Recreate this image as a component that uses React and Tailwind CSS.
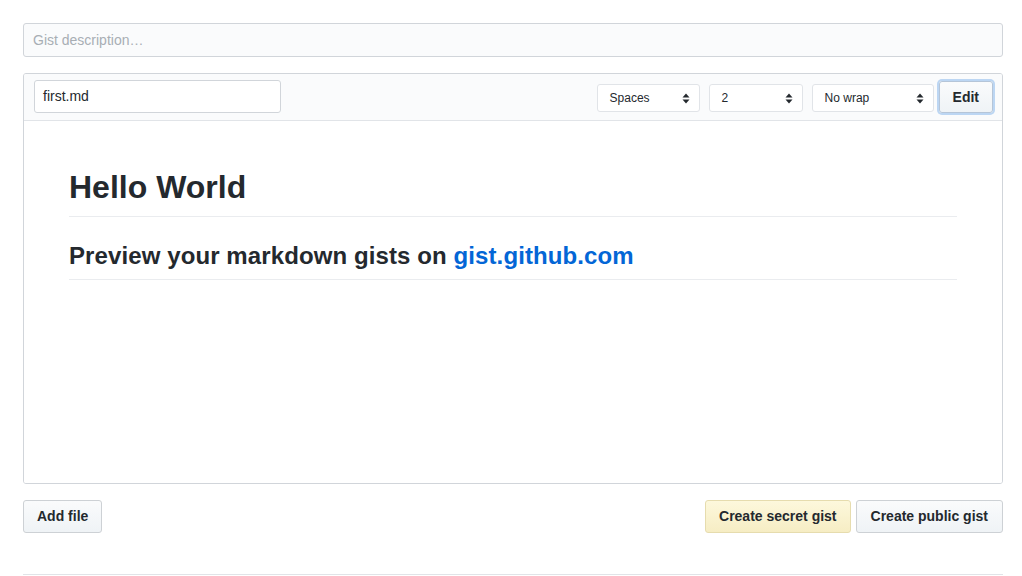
import React from 'react'

const font = { fontFamily: '"Liberation Sans", Arial, sans-serif' }

function UpDown() {
    return (
        <svg width="8" height="11" viewBox="0 0 8 11" className="text-[#24292e]">
            <path d="M4 0.5 L7.5 4.5 H0.5 Z" fill="currentColor" />
            <path d="M4 10.5 L7.5 6.5 H0.5 Z" fill="currentColor" />
        </svg>
    )
}

function Select({ label, width }) {
    return (
        <div className={`${width} h-[28px] mt-[2px] flex items-center justify-between pl-[12px] pr-[9px] bg-white border border-[#e1e4e8] rounded-[3px] text-[12px] text-[#24292e]`}>
            <span>{label}</span>
            <UpDown />
        </div>
    )
}

export default function App() {
    return (
        <div className="bg-white min-h-[576px] px-[23px] pt-[23px]" style={font}>
            <div className="w-[980px]">
                <div className="h-[34px] flex items-center px-[9px] bg-[#fafbfc] border border-[#d1d5da] rounded-[3px] text-[14px] text-[#a8aeb4]">
                    Gist description…
                </div>

                <div className="mt-[16px] border border-[#d1d5da] rounded-[3px] overflow-hidden">
                    <div className="h-[47px] flex items-center justify-between pl-[10px] pr-[9px] bg-[#fafbfc] border-b border-[#e1e4e8]">
                        <div className="w-[247px] h-[33px] -mt-[1px] flex items-center px-[8px] bg-white border border-[#d1d5da] rounded-[3px] text-[14px] text-[#24292e]">
                            first.md
                        </div>
                        <div className="flex items-center">
                            <Select label="Spaces" width="w-[103px]" />
                            <div className="w-[9px]" />
                            <Select label="2" width="w-[94px]" />
                            <div className="w-[9px]" />
                            <Select label="No wrap" width="w-[122px]" />
                            <div className="ml-[5px] h-[32px] px-[13px] flex items-center rounded-[3px] border border-[#b5c5d8] bg-gradient-to-b from-[#fafbfc] to-[#eff3f6] text-[14px] font-bold text-[#24292e] shadow-[0_0_0_2px_rgba(3,102,214,0.25)]">
                                Edit
                            </div>
                        </div>
                    </div>
                    <div className="h-[362px] bg-white px-[45px] pt-[46px]">
                        <h1 className="text-[32px] leading-[40px] font-bold text-[#24292e] pb-[9px] border-b border-[#eaecef]">
                            Hello World
                        </h1>
                        <h2 className="mt-[24px] text-[24px] leading-[30px] font-bold tracking-[0.1px] text-[#24292e] pb-[8px] border-b border-[#eaecef]">
                            Preview your markdown gists on <span className="text-[#0366d6]">gist.github.com</span>
                        </h2>
                    </div>
                </div>

                <div className="mt-[16px] flex items-center justify-between">
                    <div className="h-[33px] px-[13px] flex items-center rounded-[3px] border border-[#cdd1d5] bg-gradient-to-b from-[#fafbfc] to-[#eff3f6] text-[14px] font-bold text-[#24292e]">
                        Add file
                    </div>
                    <div className="flex items-center gap-[5px]">
                        <div className="h-[33px] px-[13px] flex items-center rounded-[3px] border border-[#e6dcae] bg-gradient-to-b from-[#fdf8dc] to-[#f6edc4] text-[14px] font-bold text-[#24292e]">
                            Create secret gist
                        </div>
                        <div className="h-[33px] px-[14px] flex items-center rounded-[3px] border border-[#cdd1d5] bg-gradient-to-b from-[#fafbfc] to-[#eff3f6] text-[14px] font-bold text-[#24292e]">
                            Create public gist
                        </div>
                    </div>
                </div>

                <div className="mt-[41px] border-t border-[#e1e4e8]" />
            </div>
        </div>
    )
}
